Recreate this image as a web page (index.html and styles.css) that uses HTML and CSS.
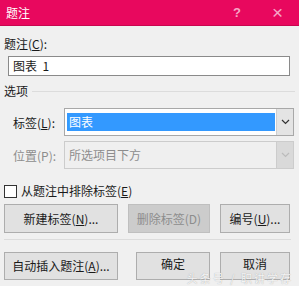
FILE: index.html
```html
<!DOCTYPE html>
<html lang="zh-CN">
<head>
    <meta charset="UTF-8">
    <title>题注</title>
    <link rel="stylesheet" href="styles.css">
</head>
<body>

<div class="dialog">
    <div class="titlebar">
        <span class="title">题注</span>
        <span class="tb-btn help">?</span>
        <span class="tb-btn close">×</span>
    </div>

    <div class="content">
        <div class="caption-label">题注(<u>C</u>):</div>
        <div class="caption-input">图表&nbsp; 1</div>

        <div class="group-title">
            <span>选项</span>
            <span class="group-line"></span>
        </div>

        <div class="field-row">
            <span class="field-label">标签(<u>L</u>):</span>
            <div class="combo">
                <div class="combo-value"><span class="selected">图表</span></div>
                <div class="combo-arrow">
                    <svg width="9" height="6" viewBox="0 0 9 6"><path d="M1 1 L4.5 4.5 L8 1" fill="none" stroke="#333" stroke-width="1.2"/></svg>
                </div>
            </div>
        </div>

        <div class="field-row disabled">
            <span class="field-label">位置(P):</span>
            <div class="combo">
                <div class="combo-value"><span class="plain">所选项目下方</span></div>
                <div class="combo-arrow">
                    <svg width="9" height="6" viewBox="0 0 9 6"><path d="M1 1 L4.5 4.5 L8 1" fill="none" stroke="#bbb" stroke-width="1.2"/></svg>
                </div>
            </div>
        </div>

        <label class="check-row">
            <span class="checkbox"></span>
            <span>从题注中排除标签(<u>E</u>)</span>
        </label>

        <div class="btn-row">
            <button class="btn btn-wide">新建标签(<u>N</u>)...</button>
            <button class="btn btn-mid" disabled>删除标签(D)</button>
            <button class="btn btn-small">编号(<u>U</u>)...</button>
        </div>

        <div class="separator"></div>

        <div class="btn-row bottom">
            <button class="btn btn-wide">自动插入题注(<u>A</u>)...</button>
            <button class="btn btn-ok">确定</button>
            <button class="btn btn-small">取消</button>
        </div>
    </div>

    <div class="watermark">头条号 / 职讲学存</div>
</div>

</body>
</html>
```

FILE: styles.css
```css
* {
    box-sizing: border-box;
}

body {
    margin: 0;
    padding: 0;
    font-family: "Noto Sans CJK SC", "Noto Sans", sans-serif;
    font-size: 12px;
    color: #1a1a1a;
    background-color: #f0f0f0;
}

.dialog {
    position: relative;
    width: 299px;
    height: 286px;
    background-color: #f0f0f0;
    overflow: hidden;
}

.titlebar {
    display: flex;
    align-items: center;
    height: 26px;
    padding-left: 6px;
    background-color: #e8085e;
    border-bottom: 1px solid #c8064f;
    color: #ffffff;
}

.title {
    flex: 1;
    font-size: 12px;
}

.tb-btn {
    color: #f6a6c6;
    font-family: "Liberation Sans", sans-serif;
    font-weight: bold;
}

.help {
    font-size: 13px;
    margin-right: 31px;
}

.close {
    font-size: 19px;
    font-weight: normal;
    margin-right: 16px;
}

.content {
    padding: 0 4px;
}

.caption-label {
    margin-top: 10px;
    line-height: 16px;
}

.caption-input {
    margin: 4px 0 0 4px;
    width: 282px;
    height: 20px;
    padding-left: 4px;
    line-height: 18px;
    border: 1px solid #8a8a8a;
    background-color: #ffffff;
    font-size: 12px;
}

.group-title {
    display: flex;
    align-items: center;
    margin-top: 7px;
    line-height: 16px;
}

.group-line {
    flex: 1;
    height: 1px;
    margin-left: 4px;
    background-color: #dcdcdc;
}

.field-row {
    display: flex;
    align-items: center;
    margin-top: 9px;
}

.field-row + .field-row {
    margin-top: 5px;
}

.field-label {
    width: 60px;
    padding-left: 9px;
}

.combo {
    display: flex;
    width: 230px;
    height: 28px;
    border: 1px solid #a8a8a8;
    background-color: #ffffff;
}

.combo-value {
    flex: 1;
    padding: 4px 1px 4px 2px;
}

.selected {
    display: block;
    height: 18px;
    line-height: 18px;
    padding-left: 2px;
    background-color: #3399ff;
    color: #ffffff;
}

.plain {
    display: block;
    line-height: 18px;
    padding-left: 2px;
}

.combo-arrow {
    display: flex;
    align-items: center;
    justify-content: center;
    width: 17px;
    background-color: #e4e4e4;
    border-left: 1px solid #cfcfcf;
}

.disabled .field-label,
.disabled .plain {
    color: #8d8d8d;
}

.disabled .combo {
    border-color: #cccccc;
    background-color: #efefef;
}

.disabled .combo-arrow {
    background-color: #d9d9d9;
    border-left-color: #cccccc;
}

.check-row {
    display: flex;
    align-items: center;
    margin-top: 15px;
    line-height: 14px;
}

.checkbox {
    width: 13px;
    height: 13px;
    margin-right: 4px;
    border: 1px solid #333333;
    background-color: #ffffff;
}

.btn-row {
    display: flex;
    margin-top: 6px;
}

.btn {
    height: 29px;
    margin: 0;
    padding: 0;
    border: 1px solid #adadad;
    background-color: #e1e1e1;
    font-family: inherit;
    font-size: 12px;
    line-height: 14px;
    color: #1a1a1a;
}

.btn:disabled {
    background-color: #cccccc;
    border-color: #bfbfbf;
    color: #8d8d8d;
}

.btn-wide {
    width: 114px;
}

.btn-mid {
    width: 82px;
    margin-left: 10px;
}

.btn-small {
    width: 70px;
    margin-left: 10px;
}

.btn-ok {
    width: 74px;
    margin-left: 18px;
}

.bottom .btn {
    height: 28px;
}

.bottom .btn-ok,
.bottom .btn-small {
    padding-bottom: 5px;
}

.separator {
    height: 1px;
    margin-top: 6px;
    margin-right: 4px;
    background-color: #dcdcdc;
}

.bottom {
    margin-top: 12px;
}

.watermark {
    position: absolute;
    right: 6px;
    bottom: 2px;
    font-size: 11px;
    line-height: 12px;
    color: rgba(255, 255, 255, 0.9);
    text-shadow: 0 0 1px #9a9a9a;
    letter-spacing: 2px;
}
```
